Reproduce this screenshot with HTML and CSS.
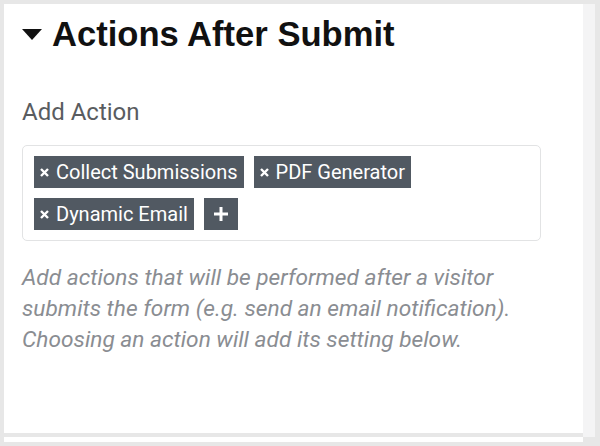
FILE: index.html
```html
<!DOCTYPE html>
<html>
<head>
<meta charset="utf-8">
<link rel="stylesheet" href="styles.css">
</head>
<body>
<div class="frame">
  <div class="column">
    <section class="panel">
      <h2 class="heading">
        <svg class="caret" width="20" height="11" viewBox="0 0 20 11"><path d="M0 0H20L10 11Z" fill="#111"/></svg>
        <span>Actions After Submit</span>
      </h2>
      <div class="label">Add Action</div>
      <div class="tagbox">
        <span class="tag"><svg class="x" width="9" height="9" viewBox="0 0 9 9"><path d="M1 1L8 8M8 1L1 8" stroke="#fff" stroke-width="2.4" stroke-linecap="butt"/></svg>Collect Submissions</span>
        <span class="tag"><svg class="x" width="9" height="9" viewBox="0 0 9 9"><path d="M1 1L8 8M8 1L1 8" stroke="#fff" stroke-width="2.4" stroke-linecap="butt"/></svg>PDF Generator</span>
        <span class="tag"><svg class="x" width="9" height="9" viewBox="0 0 9 9"><path d="M1 1L8 8M8 1L1 8" stroke="#fff" stroke-width="2.4" stroke-linecap="butt"/></svg>Dynamic Email</span>
        <span class="tag plus"><svg width="14" height="14" viewBox="0 0 14 14"><path d="M7 0V14M0 7H14" stroke="#fff" stroke-width="3"/></svg></span>
      </div>
      <p class="help">Add actions that will be performed after a visitor submits the form (e.g. send an email notification). Choosing an action will add its setting below.</p>
    </section>
    <div class="divider"></div>
    <div class="next"></div>
  </div>
  <div class="strip"></div>
</div>
</body>
</html>
```
FILE: styles.css
```css
html, body {
  margin: 0;
  padding: 0;
}
body {
  width: 600px;
  height: 446px;
  overflow: hidden;
  background: #e7e7e7;
  font-family: Roboto, "Liberation Sans", sans-serif;
}
.frame {
  display: flex;
  padding: 4px 0 0 4px;
}
.column {
  width: 579px;
  display: flex;
  flex-direction: column;
}
.panel {
  height: 429px;
  background: #fff;
  padding: 10px 0 0 18px;
  box-sizing: border-box;
}
.divider {
  height: 4px;
  background: #e7e7e7;
}
.next {
  height: 5px;
  background: #fff;
}
.strip {
  width: 12px;
  height: 433px;
  background: #f4f4f5;
}
.heading {
  margin: 0;
  display: flex;
  align-items: center;
  gap: 10px;
  font-family: "Liberation Sans", Arial, sans-serif;
  font-weight: bold;
  font-size: 34.6px;
  line-height: 40px;
  color: #111;
}
.caret {
  display: block;
  margin-top: 1px;
}
.label {
  margin-top: 44px;
  font-size: 24px;
  line-height: 28px;
  color: #595c60;
}
.tagbox {
  margin-top: 19px;
  width: 519px;
  box-sizing: border-box;
  border: 1px solid #e2e3e4;
  border-radius: 5px;
  padding: 10px 11px;
  display: flex;
  flex-wrap: wrap;
  gap: 10px 10px;
}
.tag {
  height: 32px;
  display: inline-flex;
  align-items: center;
  gap: 7px;
  padding: 0 6px;
  background: #515962;
  color: #fff;
  font-size: 20px;
}
.tag.plus {
  padding: 0 10px;
}
.x {
  display: block;
}
.help {
  margin: 21px 0 0;
  width: 519px;
  font-style: italic;
  font-size: 22.7px;
  line-height: 31px;
  color: #8a8d92;
}
```
